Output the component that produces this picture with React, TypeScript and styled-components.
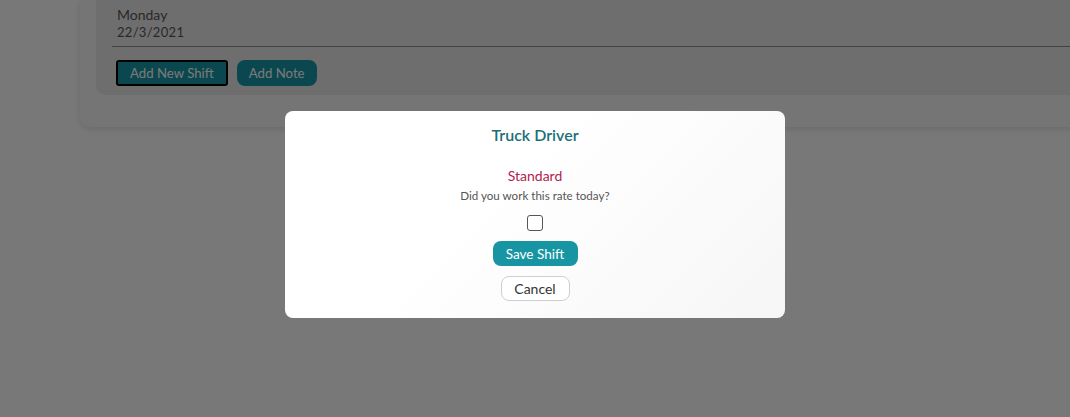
import { useState } from 'react'
import { createGlobalStyle, styled } from 'styled-components'

const GlobalStyle = createGlobalStyle`
    html, body {
        margin: 0;
        padding: 0;
        background: #fbfbfb;
        font-family: 'Lato', 'Open Sans', sans-serif;
        overflow: hidden;
    }
    * {
        box-sizing: border-box;
    }
`

const Page = styled.div`
    width: 1070px;
    height: 417px;
    position: relative;
    overflow: hidden;
    padding-left: 80px;
`

const OuterCard = styled.section`
    width: 1040px;
    background: #f5f5f5;
    border-radius: 0 0 10px 10px;
    box-shadow: 0 2px 6px rgba(0, 0, 0, 0.12);
    padding: 0 0 32px 16px;
`

const DayCard = styled.div`
    background: #e6e6e6;
    border-radius: 0 0 0 10px;
    padding: 6px 0 9px 16px;
`

const DayInfo = styled.div`
    padding-left: 5px;
    color: #555;
`

const DayName = styled.div`
    font-size: 14px;
    line-height: 18px;
`

const DayDate = styled.div`
    font-size: 13px;
    line-height: 16px;
    letter-spacing: 0.3px;
`

const Divider = styled.hr`
    margin: 6px 0 0;
    border: none;
    border-top: 1px solid #8a8a8a;
`

const ButtonRow = styled.div`
    display: flex;
    gap: 9px;
    margin-top: 13px;
    padding-left: 4px;
`

const TealButton = styled.button<{ $focused?: boolean }>`
    height: 26px;
    padding: 0 ${(p) => (p.$focused ? '12px' : '10px')};
    background: #1795a3;
    color: #fff;
    font-family: inherit;
    font-size: 13.2px;
    border-radius: ${(p) => (p.$focused ? '3px' : '8px')};
    border: 2px solid ${(p) => (p.$focused ? '#000' : '#1795a3')};
    cursor: pointer;
`

const Overlay = styled.div`
    position: fixed;
    inset: 0;
    background: rgba(0, 0, 0, 0.52);
    display: flex;
    justify-content: center;
    align-items: flex-start;
    padding-top: 111px;
`

const Modal = styled.div`
    width: 500px;
    background: linear-gradient(135deg, #ffffff 40%, #f6f6f6 100%);
    border-radius: 8px;
    padding: 14px 0 17px;
    display: flex;
    flex-direction: column;
    align-items: center;
`

const Title = styled.h2`
    margin: 0;
    font-size: 16px;
    line-height: 20px;
    font-weight: 600;
    color: #1b6f79;
`

const RateName = styled.div`
    margin-top: 23px;
    font-size: 14px;
    line-height: 16px;
    color: #b3214f;
`

const Question = styled.div`
    margin-top: 5px;
    font-size: 11.6px;
    line-height: 14px;
    color: #555;
`

const Check = styled.input`
    appearance: none;
    margin: 12px 0 0;
    width: 16px;
    height: 16px;
    border: 1.5px solid #555;
    border-radius: 3px;
    background: #fff;
    cursor: pointer;

    &:checked {
        background: #1795a3;
        border-color: #1795a3;
    }
`

const SaveButton = styled.button`
    margin-top: 10px;
    width: 85px;
    height: 25px;
    border: none;
    border-radius: 8px;
    background: #1795a3;
    color: #fff;
    font-family: inherit;
    font-size: 13.5px;
    cursor: pointer;
`

const CancelButton = styled.button`
    margin-top: 10px;
    width: 69px;
    height: 25px;
    border: 1px solid #cfcfcf;
    border-radius: 8px;
    background: #fff;
    color: #333;
    font-family: inherit;
    font-size: 14px;
    cursor: pointer;
`

export default function App() {
    const [worked, setWorked] = useState(false)

    return (
        <>
            <GlobalStyle />
            <Page>
                <OuterCard>
                    <DayCard>
                        <DayInfo>
                            <DayName>Monday</DayName>
                            <DayDate>22/3/2021</DayDate>
                        </DayInfo>
                        <Divider />
                        <ButtonRow>
                            <TealButton $focused>Add New Shift</TealButton>
                            <TealButton>Add Note</TealButton>
                        </ButtonRow>
                    </DayCard>
                </OuterCard>
                <Overlay>
                    <Modal>
                        <Title>Truck Driver</Title>
                        <RateName>Standard</RateName>
                        <Question>Did you work this rate today?</Question>
                        <Check
                            type="checkbox"
                            checked={worked}
                            onChange={(e) => setWorked(e.target.checked)}
                        />
                        <SaveButton>Save Shift</SaveButton>
                        <CancelButton>Cancel</CancelButton>
                    </Modal>
                </Overlay>
            </Page>
        </>
    )
}
